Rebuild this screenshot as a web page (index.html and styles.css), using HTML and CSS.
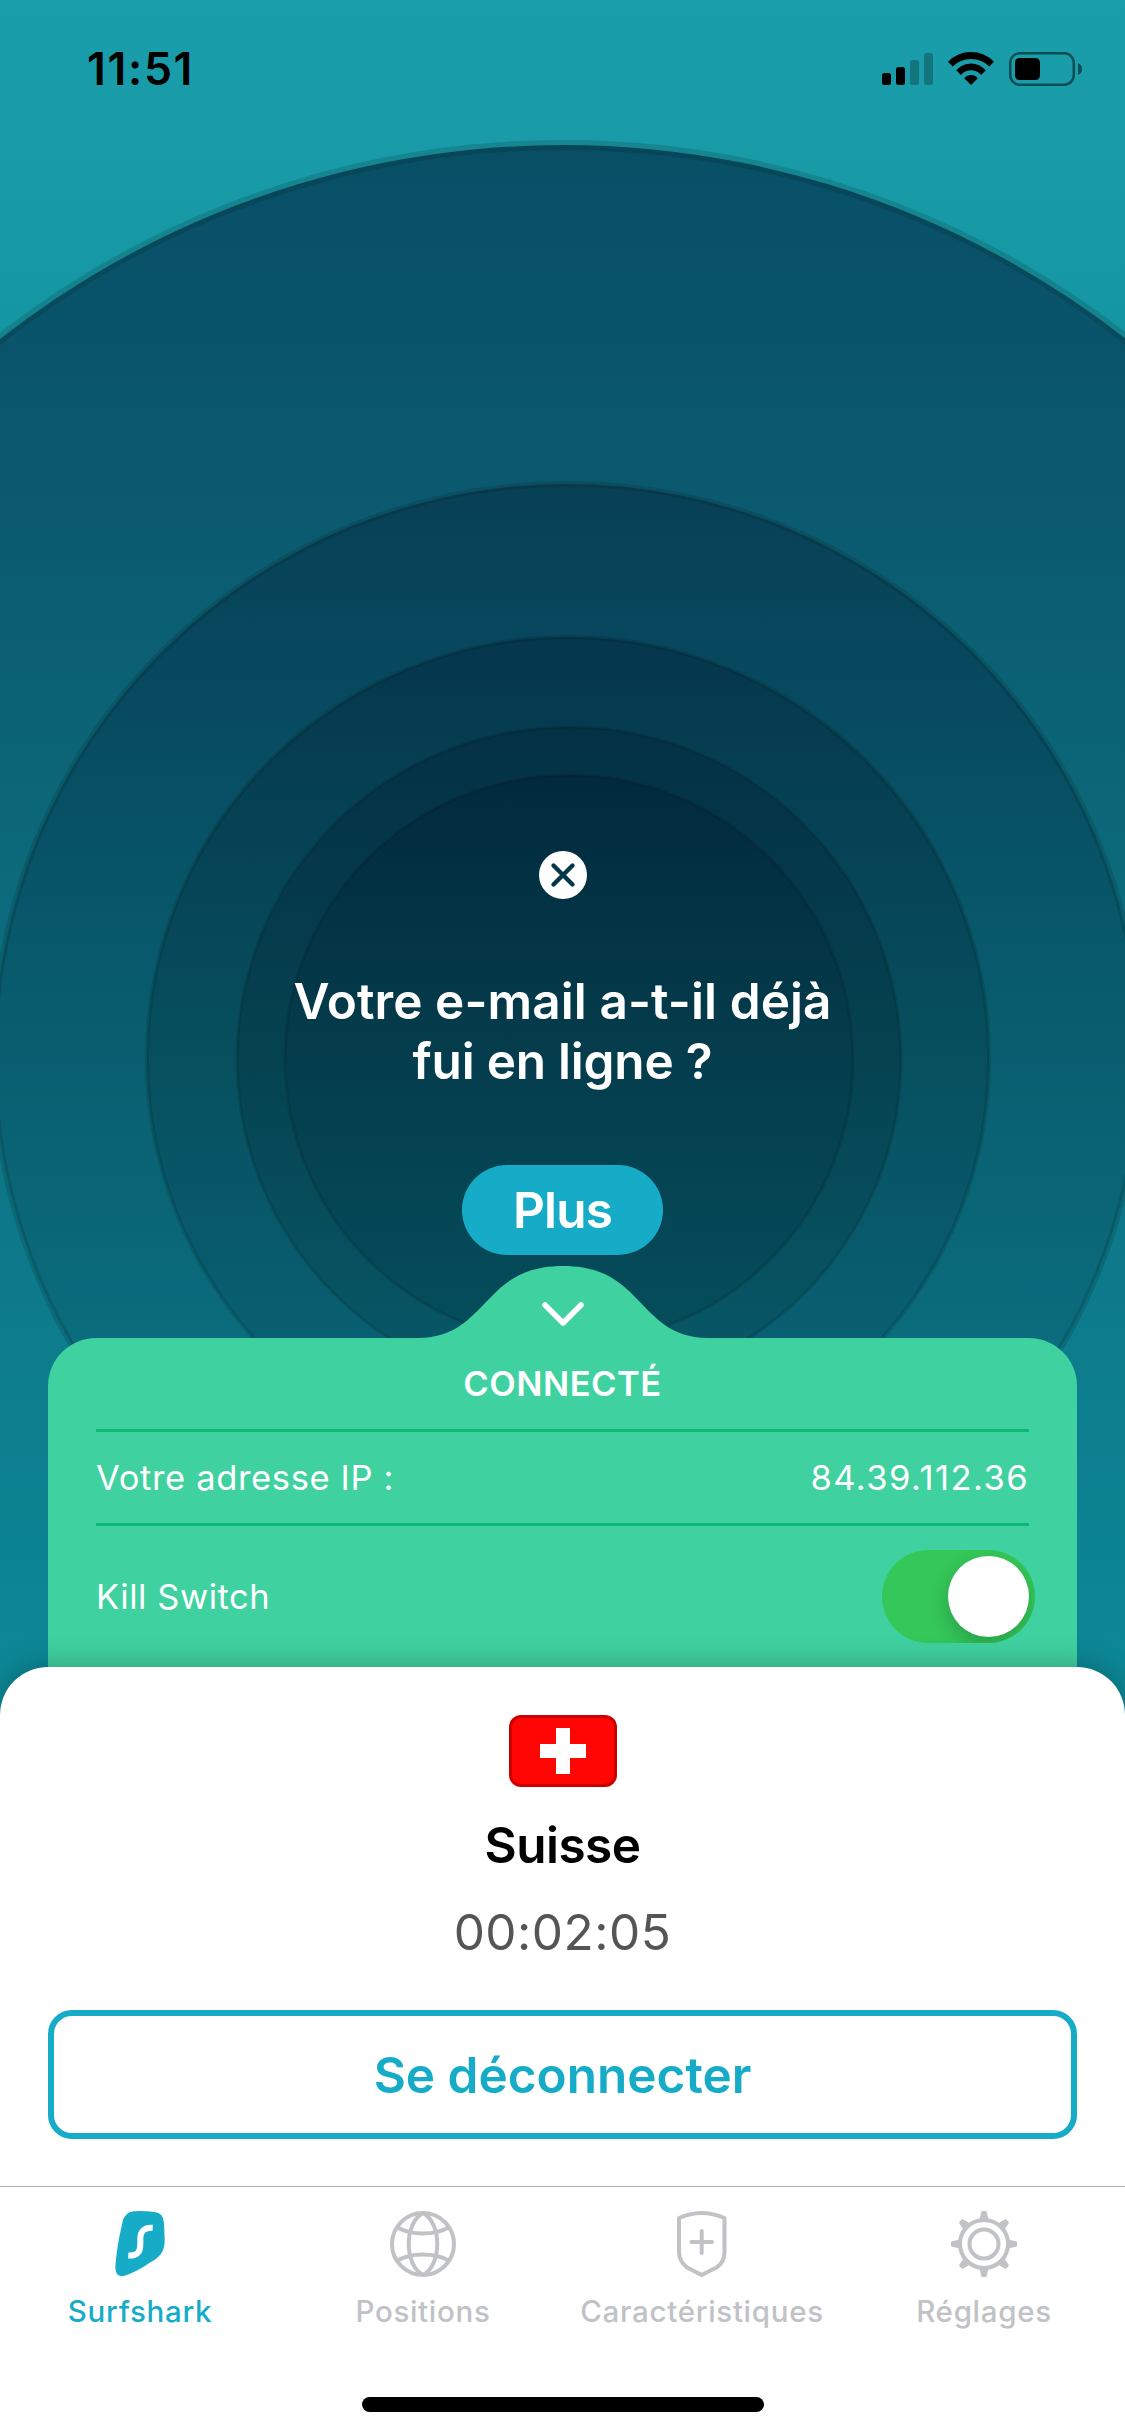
FILE: index.html
```html
<!DOCTYPE html>
<html lang="fr">
<head>
<meta charset="utf-8">
<title>Surfshark</title>
<link rel="stylesheet" href="styles.css">
</head>
<body>
<div class="screen">
  <svg class="waves" viewBox="0 0 1125 1760" aria-hidden="true">
    <defs>
      <linearGradient id="w1" gradientUnits="userSpaceOnUse" x1="0" y1="145" x2="0" y2="1760">
        <stop offset="0" stop-color="#084f66"/><stop offset=".2" stop-color="#0b586e"/><stop offset=".4" stop-color="#0b6677"/><stop offset=".67" stop-color="#0d7889"/><stop offset="1" stop-color="#0c8b99"/>
      </linearGradient>
      <linearGradient id="w2" gradientUnits="userSpaceOnUse" x1="0" y1="484" x2="0" y2="1400">
        <stop offset="0" stop-color="#084056"/><stop offset=".22" stop-color="#07495f"/><stop offset=".55" stop-color="#085b6d"/><stop offset="1" stop-color="#0b6f7f"/>
      </linearGradient>
      <linearGradient id="w3" gradientUnits="userSpaceOnUse" x1="0" y1="637" x2="0" y2="1400">
        <stop offset="0" stop-color="#05364c"/><stop offset=".5" stop-color="#064d5d"/><stop offset="1" stop-color="#096375"/>
      </linearGradient>
      <linearGradient id="w4" gradientUnits="userSpaceOnUse" x1="0" y1="727" x2="0" y2="1380">
        <stop offset="0" stop-color="#043046"/><stop offset=".5" stop-color="#054250"/><stop offset="1" stop-color="#085969"/>
      </linearGradient>
      <linearGradient id="w5" gradientUnits="userSpaceOnUse" x1="0" y1="775" x2="0" y2="1340">
        <stop offset="0" stop-color="#02293e"/><stop offset=".45" stop-color="#043b4b"/><stop offset="1" stop-color="#054e5c"/>
      </linearGradient>
    </defs>
    <g stroke="#06140f" stroke-opacity=".15">
      <circle cx="563" cy="1059" r="914" fill="url(#w1)" stroke-width="10"/>
      <circle cx="567" cy="1057" r="573" fill="url(#w2)" stroke-width="6"/>
      <circle cx="568" cy="1058" r="421" fill="url(#w3)" stroke-width="4"/>
      <circle cx="569" cy="1059" r="332" fill="url(#w4)" stroke-width="3"/>
      <circle cx="569" cy="1059" r="284" fill="url(#w5)" stroke-width="3"/>
    </g>
  </svg>

  <header class="status">
    <span class="time">11:51</span>
    <svg class="status-icons" viewBox="0 0 201 34" aria-hidden="true">
      <rect x="0" y="21" width="9" height="12" rx="2.5"/>
      <rect x="14" y="15" width="9" height="18" rx="2.5"/>
      <rect x="28" y="8" width="9" height="25" rx="2.5" opacity=".25"/>
      <rect x="42" y="1" width="9" height="32" rx="2.5" opacity=".25"/>
      <path d="M66 9.800Q75.500 0 89 0T112 9.800L107.300 14.500Q99.800 7 89 7T70.700 14.500Z"/>
      <path d="M74.200 18.300Q80.300 11.500 89 11.500T103.800 18.300L99.100 22.900Q95 18.300 89 18.300T78.900 22.900Z"/>
      <path d="M82.200 26.300Q85 23 89 23T95.800 26.300L89 33Z"/>
      <rect x="128.250" y="1.250" width="63.500" height="31.500" rx="9.500" fill="none" stroke="#000" stroke-width="2.500" opacity=".5"/>
      <rect x="133" y="6" width="25" height="22" rx="4.500"/>
      <path d="M196 11Q200 12.500 200 17T196 23Z" opacity=".5"/>
    </svg>
  </header>

  <main class="promo">
    <button class="close" aria-label="Fermer">
      <svg viewBox="0 0 48 48"><circle cx="24" cy="24" r="24" fill="#fff"/><path d="M14.500 14.500l19 19M33.500 14.500l-19 19" stroke="#04374b" stroke-width="4.400" stroke-linecap="round"/></svg>
    </button>
    <h1 class="question">Votre e-mail a-t-il déjà<br><span class="question-end">fui en ligne ?</span></h1>
    <button class="more"><span>Plus</span></button>
  </main>

  <section class="panel">
    <svg class="bump" viewBox="0 0 290 73" aria-hidden="true">
      <path d="M0 73V72C38 72 54 50 74 30C92 11 112 0 145 0C178 0 198 11 216 30C236 50 252 72 290 72V73Z" fill="#40d1a0"/>
      <path d="M127 39l18 18 18-18" fill="none" stroke="#fff" stroke-width="5.500" stroke-linecap="round" stroke-linejoin="round"/>
    </svg>
    <div class="card">
      <h2 class="state">CONNECTÉ</h2>
      <div class="row"><span class="ip-label">Votre adresse IP :</span><span class="ip">84.39.112.36</span></div>
      <div class="row row-switch"><span class="kill">Kill Switch</span><span class="toggle"><span class="knob"></span></span></div>
    </div>
  </section>

  <section class="sheet">
    <svg class="flag" viewBox="0 0 108 72" aria-label="Suisse">
      <rect width="108" height="72" rx="12" fill="#c00"/>
      <rect x="3" y="3" width="102" height="66" rx="9" fill="#ff0504"/>
      <path d="M47 13h14v16h16v14H61v16H47V43H31V29h16z" fill="#fff"/>
    </svg>
    <div class="country">Suisse</div>
    <div class="timer">00:02:05</div>
    <button class="disconnect"><span>Se déconnecter</span></button>
  </section>

  <nav class="tabs">
    <a class="tab active">
      <svg viewBox="0 0 66 66"><path d="M27 .2Q37-.3 47.500 1Q56.600 1.800 57 12L57.700 29C57.700 42 52 46.500 43 51.500C36 56.500 30 60 21 63.500Q8.500 69 8.300 56Q9.500 37 15.500 11Q17.500 1 27 .2Z" fill="#16acc8"/><path d="M21.300 44.600C31 45 33.300 40 33.300 34V27.500C33.300 20.500 37 16.300 45.700 16.700" fill="none" stroke="#fff" stroke-width="6"/></svg>
      <span>Surfshark</span>
    </a>
    <a class="tab">
      <svg viewBox="0 0 66 66" fill="none" stroke="#c1c2c6" stroke-width="4"><circle cx="33" cy="33" r="31"/><path d="M33 2C14 12 14 54 33 64M33 2C52 12 52 54 33 64M7.500 16.500Q18 22.500 33 22.500T58.500 16.500M7.500 49.500Q18 43.500 33 43.500T58.500 49.500"/></svg>
      <span>Positions</span>
    </a>
    <a class="tab">
      <svg viewBox="0 0 66 66" fill="none" stroke="#c1c2c6" stroke-width="4"><path d="M10 7Q32.500-3 55.500 7V41Q55.500 51 47.500 56.500L32.700 64L18 56.500Q10 50 10 41Z" stroke-linejoin="round"/><path d="M32.700 20v22M22.500 31h20.500" stroke-linecap="round"/></svg>
      <span>Caractéristiques</span>
    </a>
    <a class="tab">
      <svg viewBox="0 0 66 66" fill="none" stroke="#c1c2c6" stroke-width="4"><circle cx="33" cy="33" r="24"/><circle cx="33" cy="33" r="14.500"/>
        <g fill="#c1c2c6" stroke="none">
          <path id="tooth" d="M28.500 9L30.200 1Q30.300 0 31.300 0H34.700Q35.700 0 35.800 1L37.500 9Z"/>
          <use href="#tooth" transform="rotate(45 33 33)"/><use href="#tooth" transform="rotate(90 33 33)"/><use href="#tooth" transform="rotate(135 33 33)"/><use href="#tooth" transform="rotate(180 33 33)"/><use href="#tooth" transform="rotate(225 33 33)"/><use href="#tooth" transform="rotate(270 33 33)"/><use href="#tooth" transform="rotate(315 33 33)"/>
        </g></svg>
      <span>Réglages</span>
    </a>
  </nav>
  <div class="home"></div>
</div>
</body>
</html>
```
FILE: styles.css
```css
* { box-sizing: border-box; margin: 0; padding: 0; }
body { width: 1125px; font-family: Inter, "Liberation Sans", sans-serif; }
button { border: 0; background: none; font: inherit; }
svg { display: block; }

.screen {
  position: relative;
  display: flex;
  flex-direction: column;
  width: 1125px;
  height: 2436px;
  overflow: hidden;
  background: linear-gradient(#1b9eab, #1596a3 330px, #0c8b99 1760px);
}
.waves { position: absolute; left: 0; top: 0; width: 1125px; height: 1760px; }
.status, .promo, .panel, .sheet, .tabs, .home { position: relative; }

.status {
  display: flex;
  justify-content: space-between;
  height: 132px;
  padding: 52px 42px 0 87px;
  flex: none;
}
.time { font-size: 44.5px; font-weight: 600; line-height: 34px; letter-spacing: 1.7px; }
.status-icons { width: 201px; height: 34px; }

.promo { display: flex; flex-direction: column; align-items: center; height: 1134px; padding-top: 719px; flex: none; color: #fff; }
.close, .close svg { width: 48px; height: 48px; }
.question { margin-top: 72px; font-size: 49.5px; font-weight: 600; line-height: 60px; letter-spacing: .1px; text-align: center; white-space: nowrap; }
.question-end { letter-spacing: -.2px; }
.more { display: flex; align-items: center; justify-content: center; margin-top: 74px; width: 201px; height: 90px; border-radius: 45px; background: #16acc8; color: #fff; font-size: 49.5px; font-weight: 600; letter-spacing: -.8px; }

.panel { height: 401px; flex: none; display: flex; flex-direction: column; align-items: center; }
.bump { width: 290px; height: 73px; flex: none; margin-bottom: -1px; }
.card { width: 1029px; height: 340px; padding: 0 48px; border-radius: 48px 48px 0 0; background: #40d1a0; color: #fff; font-size: 34.5px; }
.state { height: 91px; line-height: 91px; font-size: 34.5px; font-weight: 600; letter-spacing: .5px; text-align: center; }
.row { display: flex; justify-content: space-between; align-items: center; height: 94px; border-top: 3px solid #0eb974; white-space: nowrap; }
.ip-label { letter-spacing: .65px; }
.ip { letter-spacing: 1.45px; }
.kill { letter-spacing: .55px; }
.row-switch { height: 144px; }
.toggle { display: flex; width: 153px; height: 93px; padding: 6px; margin-right: -6px; justify-content: flex-end; border-radius: 46.5px; background: #34c759; overflow: hidden; }
.knob { width: 81px; height: 81px; border-radius: 50%; background: #fff; box-shadow: 0 8px 20px rgba(0, 0, 0, .2); }

.sheet { display: flex; flex-direction: column; align-items: center; height: 519px; flex: none; padding: 48px 48px 0; border-radius: 48px 48px 0 0; background: #fff; box-shadow: 0 0 30px rgba(0, 0, 0, .28); }
.flag { width: 108px; height: 72px; }
.country { margin-top: 28px; height: 60px; line-height: 60px; font-size: 49.5px; font-weight: 600; letter-spacing: -.5px; }
.timer { margin-top: 27px; height: 60px; line-height: 60px; font-size: 49.5px; letter-spacing: .5px; color: #555; }
.disconnect { margin-top: 48px; width: 1029px; height: 129px; border: 6px solid #16acc8; border-radius: 24px; color: #16acc8; font-size: 49.5px; font-weight: 600; }

.tabs { display: grid; grid-template-columns: 285px 276px 282px 282px; height: 211px; flex: none; border-top: 1px solid #adadad; background: #fff; padding-top: 24px; }
.tab { display: flex; flex-direction: column; align-items: center; color: #c1c2c6; font-size: 29.5px; font-weight: 500; line-height: 36px; letter-spacing: .7px; white-space: nowrap; }
.tab svg { width: 66px; height: 66px; margin-bottom: 16px; }
.active { padding-right: 5px; color: #16acc8; }
.home { flex: 1; background: #fff; }
.home::before { content: ""; display: block; width: 402px; height: 15px; margin: 0 auto; border-radius: 7.5px; background: #000; }
```
